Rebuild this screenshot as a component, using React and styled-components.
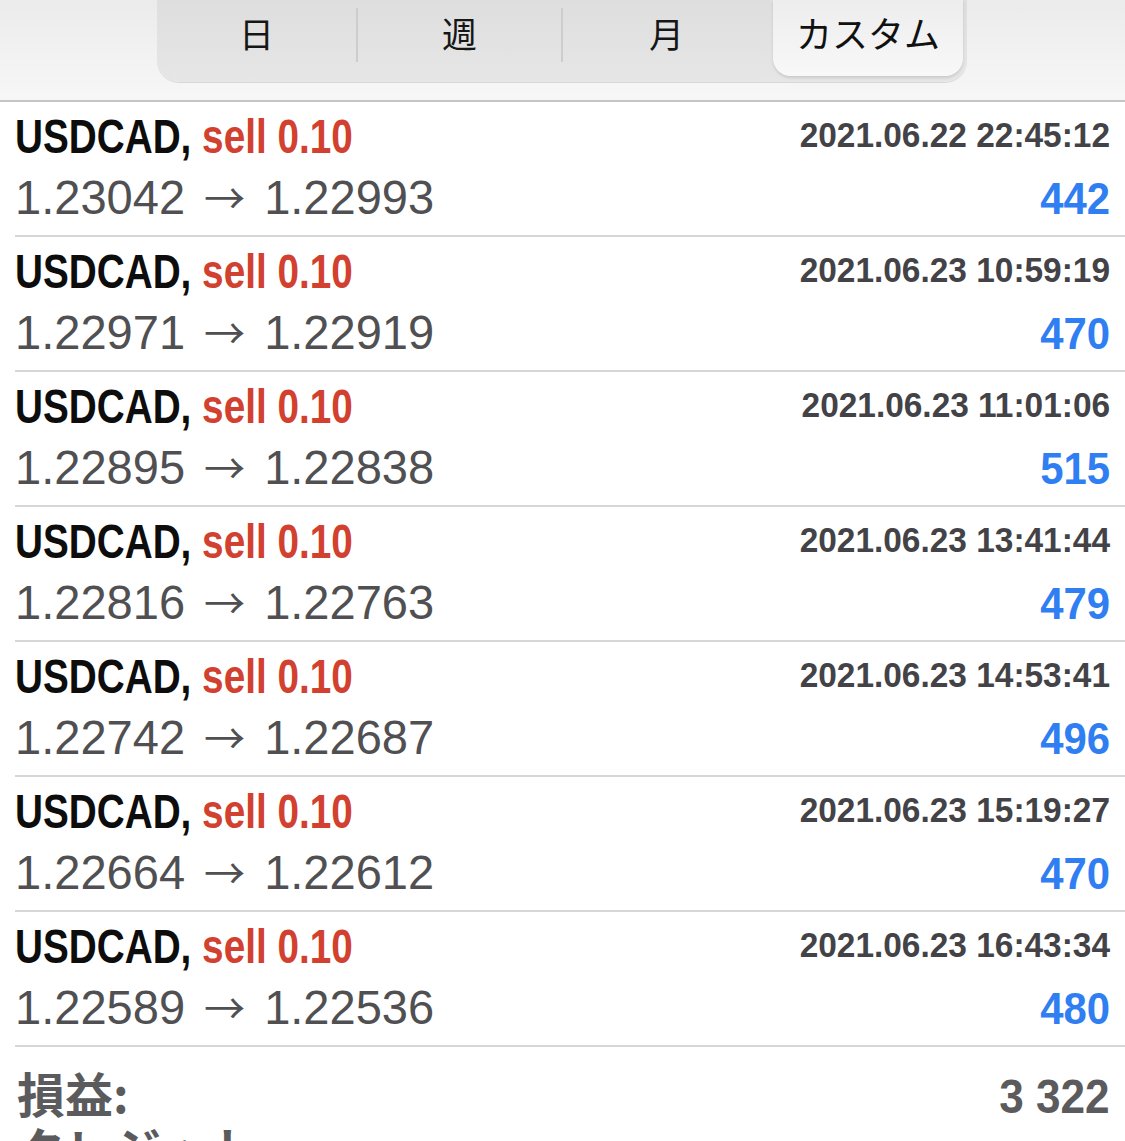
import React from "react";
import styled, { createGlobalStyle } from "styled-components";

const GlobalStyle = createGlobalStyle`
  html, body {
    margin: 0;
    padding: 0;
    background: #ffffff;
    overflow: hidden;
  }
  body {
    font-family: "Liberation Sans", "Noto Sans CJK JP", sans-serif;
  }
`;

const StPage = styled.div`
  width: 1125px;
  height: 1141px;
  overflow: hidden;
  background: #ffffff;
`;

const StHeader = styled.div`
  height: 100px;
  background: linear-gradient(#ebebeb, #f7f7f7);
  border-bottom: 2px solid #c4c4c4;
  display: flex;
  align-items: flex-start;
`;

const StSegments = styled.div`
  margin-left: 157px;
  width: 810px;
  height: 82px;
  display: flex;
  background: linear-gradient(#dedede, #e6e6e6);
  border-radius: 0 0 22px 22px;
  box-shadow: 0 1px 0 #d8d8d8;
`;

const StSegment = styled.div`
  flex: 0 0 ${(p) => p.$width}px;
  box-sizing: border-box;
  display: flex;
  align-items: center;
  justify-content: center;
  font-family: "Noto Sans CJK JP", sans-serif;
  font-size: 35px;
  color: #161616;
  border-right: ${(p) => (p.$divider ? "2px solid #cdcdcd" : "none")};
  margin: ${(p) => (p.$divider ? "8px 0 20px" : "0")};
  padding-bottom: ${(p) => (p.$divider ? "6px" : "18px")};
`;

const StActive = styled.div`
  flex: 1;
  display: flex;
  align-items: center;
  justify-content: center;
  margin: 0 4px 6px 3px;
  padding-bottom: 12px;
  background: linear-gradient(#ededed, #f8f8f8);
  border-radius: 0 0 18px 18px;
  box-shadow: 0 2px 3px rgba(0, 0, 0, 0.12);
  font-family: "Noto Sans CJK JP", sans-serif;
  font-size: 36px;
  color: #111111;
`;

const StRow = styled.div`
  margin-left: 15px;
  padding: 4px 15px 9px 0;
  border-bottom: 2px solid #d6d6d6;
`;

const StLine = styled.div`
  height: 60px;
  line-height: 60px;
  display: flex;
  justify-content: space-between;
  align-items: ${(p) => (p.$top ? "flex-start" : "baseline")};
  white-space: nowrap;
`;

const StSqueeze = styled.span`
  display: inline-block;
  transform: scaleX(${(p) => p.$scale});
  transform-origin: ${(p) => (p.$right ? "right" : "left")} center;
`;

const StSymbol = styled(StSqueeze)`
  font-size: 49px;
  font-weight: 700;
  color: #0d0d0d;
`;

const StSell = styled.span`
  color: #d2402f;
`;

const StDate = styled(StSqueeze)`
  font-size: 35px;
  line-height: 58px;
  font-weight: 700;
  color: #434347;
`;

const StPrice = styled(StSqueeze)`
  font-size: 48px;
  color: #505053;
`;

const StArrow = styled.span`
  font-family: "Noto Sans CJK JP", sans-serif;
  font-size: 42px;
  margin: 0 6px;
`;

const StProfit = styled(StSqueeze)`
  font-size: 45px;
  font-weight: 700;
  color: #2f7ef2;
`;

const StSummary = styled.div`
  margin-left: 15px;
  padding: 20px 15px 0 2px;
`;

const StSummaryLine = styled.div`
  height: 55px;
  line-height: 55px;
  display: flex;
  justify-content: space-between;
  align-items: baseline;
  white-space: nowrap;
  color: #5b5b5d;
`;

const StSummaryLabel = styled.span`
  font-family: "Noto Sans CJK JP", sans-serif;
  font-size: 48px;
  line-height: 50px;
  font-weight: 700;
`;

const StSummaryValue = styled(StSqueeze)`
  font-size: 49px;
  font-weight: 700;
`;

const trades = [
  { date: "2021.06.22 22:45:12", open: "1.23042", close: "1.22993", profit: "442" },
  { date: "2021.06.23 10:59:19", open: "1.22971", close: "1.22919", profit: "470" },
  { date: "2021.06.23 11:01:06", open: "1.22895", close: "1.22838", profit: "515" },
  { date: "2021.06.23 13:41:44", open: "1.22816", close: "1.22763", profit: "479" },
  { date: "2021.06.23 14:53:41", open: "1.22742", close: "1.22687", profit: "496" },
  { date: "2021.06.23 15:19:27", open: "1.22664", close: "1.22612", profit: "470" },
  { date: "2021.06.23 16:43:34", open: "1.22589", close: "1.22536", profit: "480" },
];

export default function App() {
  return (
    <StPage>
      <GlobalStyle />
      <StHeader>
        <StSegments>
          <StSegment $divider $width={201}>日</StSegment>
          <StSegment $divider $width={205}>週</StSegment>
          <StSegment $width={207}>月</StSegment>
          <StActive>カスタム</StActive>
        </StSegments>
      </StHeader>

      {trades.map((t) => (
        <StRow key={t.date}>
          <StLine $top>
            <StSymbol $scale={0.79}>
              USDCAD, <StSell>sell 0.10</StSell>
            </StSymbol>
            <StDate $scale={0.955} $right>
              {t.date}
            </StDate>
          </StLine>
          <StLine>
            <StPrice $scale={0.98}>
              {t.open} <StArrow>→</StArrow> {t.close}
            </StPrice>
            <StProfit $scale={0.93} $right>
              {t.profit}
            </StProfit>
          </StLine>
        </StRow>
      ))}

      <StSummary>
        <StSummaryLine>
          <StSummaryLabel>損益:</StSummaryLabel>
          <StSummaryValue $scale={0.9} $right>
            3 322
          </StSummaryValue>
        </StSummaryLine>
        <StSummaryLine>
          <StSummaryLabel>クレジット:</StSummaryLabel>
          <span />
        </StSummaryLine>
      </StSummary>
    </StPage>
  );
}
